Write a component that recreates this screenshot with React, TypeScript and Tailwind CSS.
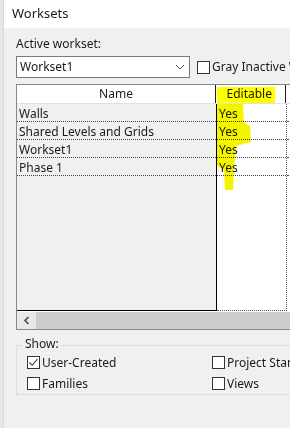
import React from 'react';

const rows = ['Walls', 'Shared Levels and Grids', 'Workset1', 'Phase 1'];

function Check({ checked }: { checked?: boolean }) {
  return (
    <span className="w-[13px] h-[13px] border border-[#333] bg-white flex items-center justify-center shrink-0">
      {checked && (
        <svg width="11" height="11" viewBox="0 0 11 11">
          <path d="M1.5 5.5 L4.2 8.3 L9.5 2" fill="none" stroke="#333" strokeWidth="1.1" />
        </svg>
      )}
    </span>
  );
}

export default function App() {
  return (
    <div
      className="w-[290px] h-[428px] bg-[#f0f0f0] flex overflow-hidden relative text-[12px] text-[#1a1a1a]"
      style={{ fontFamily: '"Noto Sans", "Segoe UI", sans-serif' }}
    >
      {/* window edge */}
      <div className="w-[4px] shrink-0 bg-[#e6e6e6] border-r border-[#d9d9d9]" />

      <div className="flex-1 flex flex-col min-w-0">
        {/* Title */}
        <div className="h-[28px] bg-white flex items-center pl-[8px] text-[13px] shrink-0">Worksets</div>

        <div className="pl-[12px] flex flex-col">
          <div className="h-[18px] mt-[7px] leading-[18px]">Active workset:</div>

          {/* Dropdown + checkbox */}
          <div className="flex items-center mt-[3px] h-[22px]">
            <div className="w-[174px] h-[22px] bg-white border border-[#7a7a7a] flex items-center justify-between pl-[3px] pr-[4px] shrink-0">
              <span>Workset1</span>
              <svg width="10" height="6" viewBox="0 0 10 6">
                <path d="M1 1 L5 5 L9 1" fill="none" stroke="#555" strokeWidth="1" />
              </svg>
            </div>
            <div className="ml-[7px] flex items-center gap-[2px] whitespace-nowrap">
              <Check />
              <span>Gray Inactive Worksets in Graphics</span>
            </div>
          </div>

          {/* Table */}
          <div className="mt-[6px] h-[246px] border border-[#828790] bg-white flex flex-col w-[300px] shrink-0">
            <div className="h-[19px] flex border-b border-[#e0e0e0] shrink-0">
              <div className="w-[199px] border-r border-[#1a1a1a] flex items-center justify-center">Name</div>
              <div className="w-[70px] border-r border-[#1a1a1a] flex items-center justify-end pr-[13px]">Editable</div>
              <div className="flex-1" />
            </div>
            <div className="flex flex-1">
              <div className="w-[200px] bg-[#f0f0f0] border-r border-b border-black flex flex-col">
                {rows.map((r) => (
                  <div key={r} className="h-[18px] border-b border-dotted border-[#444] pl-[2px] pt-[1px] leading-[17px] whitespace-nowrap">
                    {r}
                  </div>
                ))}
              </div>
              <div className="w-[70px] bg-white border-r border-b border-dotted border-[#555] flex flex-col">
                {rows.map((r) => (
                  <div key={r} className="h-[18px] border-b border-dotted border-[#444] pl-[2px] pt-[1px] leading-[17px]">
                    Yes
                  </div>
                ))}
              </div>
              <div className="flex-1 bg-white flex flex-col">
                {rows.map((r) => (
                  <div key={r} className="h-[18px] border-b border-dotted border-[#444]" />
                ))}
              </div>
            </div>
            {/* horizontal scrollbar */}
            <div className="h-[17px] flex bg-[#e8e8e8] shrink-0 mt-[1px]">
              <div className="w-[19px] flex items-center justify-center">
                <svg width="7" height="9" viewBox="0 0 7 9">
                  <path d="M5.5 1 L2 4.5 L5.5 8" fill="none" stroke="#444" strokeWidth="1.6" />
                </svg>
              </div>
              <div className="flex-1 bg-[#cdcdcd]" />
            </div>
          </div>

          {/* Show group */}
          <div className="relative mt-[15px] h-[50px] border border-[#dcdcdc] w-[300px] shrink-0">
            <span className="absolute -top-[10px] left-[6px] px-[2px] bg-[#f0f0f0] leading-[16px]">Show:</span>
            <div className="grid grid-cols-[185px_1fr] gap-y-[4px] pt-[8px] pl-[10px]">
              <div className="flex items-center gap-[2px] h-[17px]">
                <Check checked />
                <span>User-Created</span>
              </div>
              <div className="flex items-center gap-[2px] h-[17px] whitespace-nowrap">
                <Check />
                <span>Project Standards</span>
              </div>
              <div className="flex items-center gap-[2px] h-[17px]">
                <Check />
                <span>Families</span>
              </div>
              <div className="flex items-center gap-[2px] h-[17px]">
                <Check />
                <span>Views</span>
              </div>
            </div>
          </div>
        </div>
      </div>

      {/* highlighter marks */}
      <svg className="absolute left-0 top-0 pointer-events-none mix-blend-multiply" width="290" height="428">
        <rect x="217" y="87" width="58" height="16" fill="#ffff00" />
        <path
          d="M217 104 L243 104 L244 122 L250 126 L251 142 L236 146 L234 170 L233 190 L225 190 L224 170 L217 166 Z"
          fill="#f4f400"
        />
      </svg>
    </div>
  );
}
